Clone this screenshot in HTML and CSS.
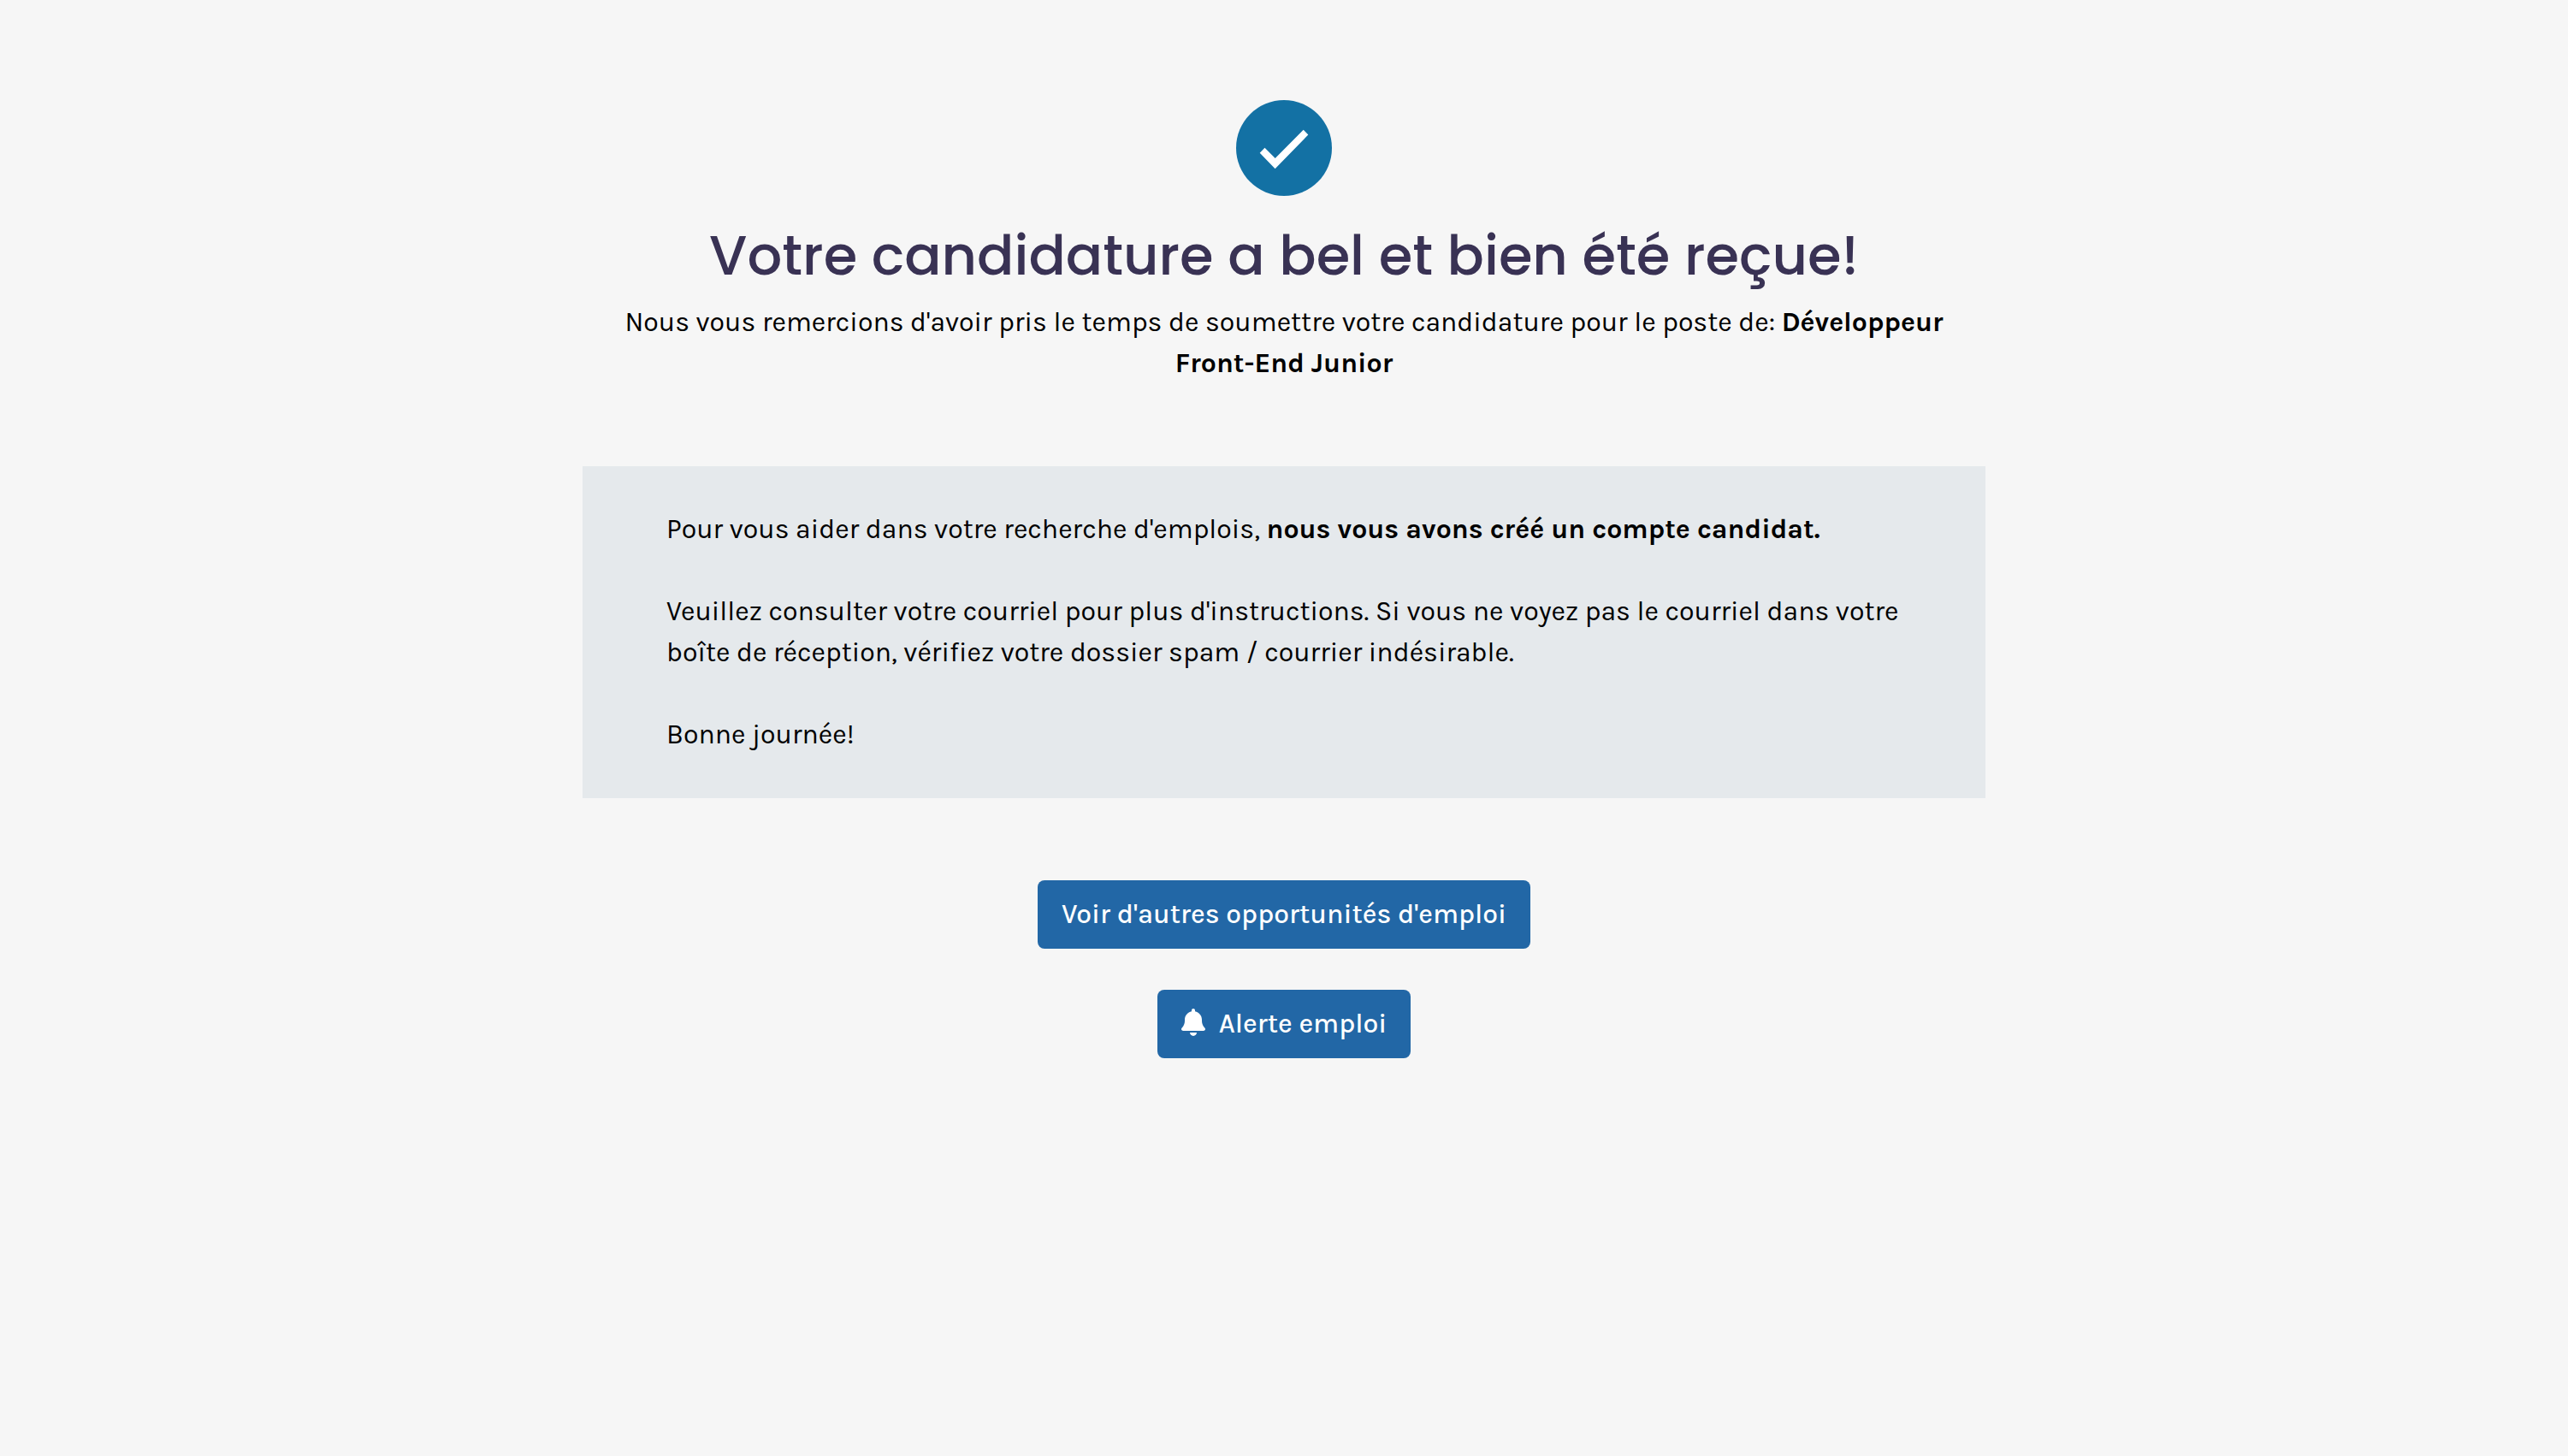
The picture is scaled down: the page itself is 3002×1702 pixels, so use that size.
FILE: index.html
```html
<!DOCTYPE html>
<html lang="fr">
<head>
<meta charset="utf-8">
<meta name="viewport" content="width=device-width, initial-scale=1">
<title>Candidature reçue</title>
<link rel="stylesheet" href="styles.css">
</head>
<body>
<main class="confirmation">
  <svg class="status-icon" viewBox="0 0 112 112" aria-hidden="true">
    <circle cx="56" cy="56" r="56" fill="#1371a4"/>
    <path d="M33.5 55.7 45.7 68 78.7 34.7 84.3 40.6 45.6 80.3 27.7 61.7z" fill="#fff"/>
  </svg>
  <h1 class="title">Votre candidature a bel et bien été reçue!</h1>
  <p class="intro">Nous vous remercions d'avoir pris le temps de soumettre votre candidature pour le poste de: <strong>Développeur Front-End Junior</strong></p>
  <section class="notice">
    <p>Pour vous aider dans votre recherche d'emplois, <strong>nous vous avons créé un compte candidat.</strong></p>
    <p>Veuillez consulter votre courriel pour plus d'instructions. Si vous ne voyez pas le courriel dans votre boîte de réception, vérifiez votre dossier spam / courrier indésirable.</p>
    <p>Bonne journée!</p>
  </section>
  <div class="actions">
    <button class="button" type="button">Voir d'autres opportunités d'emploi</button>
    <button class="button" type="button">
      <svg class="bell" viewBox="0 0 448 512" aria-hidden="true"><path fill="currentColor" d="M224 0c-17.7 0-32 14.3-32 32V51.2C119 66 64 130.6 64 208v18.8c0 47-17.3 92.4-48.5 127.6l-7.4 8.3c-8.4 9.4-10.4 22.9-5.3 34.4S19.4 416 32 416H416c12.6 0 24-7.4 29.2-18.9s3.1-25-5.3-34.4l-7.4-8.3C401.3 319.2 384 273.9 384 226.8V208c0-77.4-55-142-128-156.8V32c0-17.7-14.3-32-32-32zm45.3 493.3c12-12 18.7-28.3 18.7-45.3H224 160c0 17 6.7 33.3 18.7 45.3s28.3 18.7 45.3 18.7s33.3-6.7 45.3-18.7z"/></svg>
      Alerte emploi
    </button>
  </div>
</main>
</body>
</html>
```
FILE: styles.css
```css
* {
  box-sizing: border-box;
}

body {
  margin: 0;
  background: #f6f6f6;
  color: #000;
  font-family: Karla, Roboto, sans-serif;
  font-size: 32px;
  line-height: 48px;
}

p {
  margin: 0;
}

.confirmation {
  display: flex;
  flex-direction: column;
  align-items: center;
  max-width: 1640px;
  margin: 0 auto;
  padding: 117px 0 96px;
}

.status-icon {
  width: 112px;
  height: 112px;
}

.title {
  margin: 22px 0 6px;
  color: #393254;
  font-family: Poppins, Inter, sans-serif;
  font-size: 64px;
  font-weight: 500;
  line-height: 96px;
  text-align: center;
}

.intro {
  text-align: center;
}

.notice {
  display: flex;
  flex-direction: column;
  gap: 48px;
  align-self: stretch;
  margin: 96px 0;
  padding: 50px 98px;
  background: #e5e9ec;
}

.actions {
  display: flex;
  flex-direction: column;
  align-items: center;
  gap: 48px;
}

.button {
  display: flex;
  align-items: center;
  gap: 16px;
  padding: 16px 28px;
  border: 0;
  border-radius: 8px;
  background: #2267a6;
  color: #fff;
  font: inherit;
  font-weight: 500;
  cursor: pointer;
}

.bell {
  width: 28px;
  height: 32px;
  margin-bottom: 4px;
}
```
